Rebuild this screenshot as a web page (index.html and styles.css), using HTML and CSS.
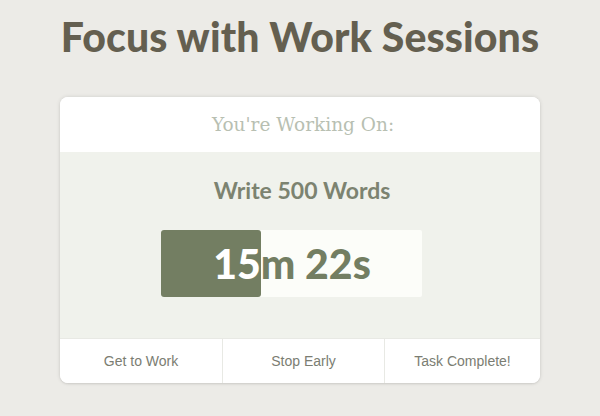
FILE: index.html
```html
<!DOCTYPE html>
<html>
<head>
<meta charset="utf-8">
<link rel="stylesheet" href="styles.css">
</head>
<body>
<h1 class="title">Focus with Work Sessions</h1>
<div class="card">
  <div class="card-head">You're Working On:</div>
  <div class="card-body">
    <div class="task">Write 500 Words</div>
    <div class="timer">
      <div class="timer-text">15m 22s</div>
      <div class="timer-fill" style="width:100px">
        <div class="timer-text light" aria-hidden="true">15m 22s</div>
      </div>
    </div>
  </div>
  <div class="card-actions">
    <button class="action">Get to Work</button>
    <button class="action">Stop Early</button>
    <button class="action last">Task Complete!</button>
  </div>
</div>
</body>
</html>
```
FILE: styles.css
```css
html, body {
  margin: 0;
  padding: 0;
  background: #ecebe7;
  width: 600px;
  height: 416px;
  overflow: hidden;
}
body {
  display: flex;
  flex-direction: column;
  align-items: center;
}
.title {
  margin: 13px 0 0 0;
  height: 84px;
  font-family: "Lato", sans-serif;
  font-weight: 900;
  font-size: 41px;
  letter-spacing: 0.1px;
  line-height: 48px;
  color: #645f50;
  text-align: center;
}
.card {
  width: 480px;
  height: 286px;
  background: #ffffff;
  border-radius: 8px;
  box-shadow: 0 0 4px rgba(0,0,0,0.12), 0 1px 2px rgba(0,0,0,0.08);
  overflow: hidden;
  display: flex;
  flex-direction: column;
}
.card-head {
  height: 55px;
  display: flex;
  align-items: center;
  justify-content: center;
  padding-left: 6px;
  font-family: "DejaVu Serif", serif;
  font-size: 18.5px;
  color: #b8bfb2;
  background: #ffffff;
}
.card-body {
  height: 186px;
  background: #f0f2ec;
  display: flex;
  flex-direction: column;
  align-items: center;
}
.task {
  margin-top: 24px;
  margin-left: 4px;
  height: 54px;
  font-family: "Lato", sans-serif;
  font-weight: 700;
  font-size: 23px;
  line-height: 28px;
  color: #7c8370;
}
.timer {
  position: relative;
  width: 261px;
  height: 67px;
  background: #fcfdf9;
  border-radius: 2px;
  margin-right: 18px;
}
.timer-text {
  width: 261px;
  height: 67px;
  display: flex;
  align-items: center;
  justify-content: center;
  font-family: "Lato", sans-serif;
  font-weight: 900;
  font-size: 41px;
  color: #737e62;
  padding-left: 2px;
  box-sizing: border-box;
}
.timer-text.light {
  color: #ffffff;
}
.timer-fill {
  position: absolute;
  left: 0;
  top: 0;
  height: 67px;
  overflow: hidden;
  background: #737e62;
  border-radius: 3px;
}
.card-actions {
  height: 45px;
  display: flex;
  border-top: 1px solid #e8e9e4;
  box-sizing: border-box;
}
.action {
  flex: 0 0 162px;
  border: none;
  background: #ffffff;
  font-family: "Liberation Sans", Arial, sans-serif;
  font-size: 14px;
  color: #7b7d72;
  padding: 0;
  margin: 0;
}
.action.last {
  flex: 1 1 auto;
}
.action + .action {
  border-left: 1px solid #e8e9e4;
}
```
